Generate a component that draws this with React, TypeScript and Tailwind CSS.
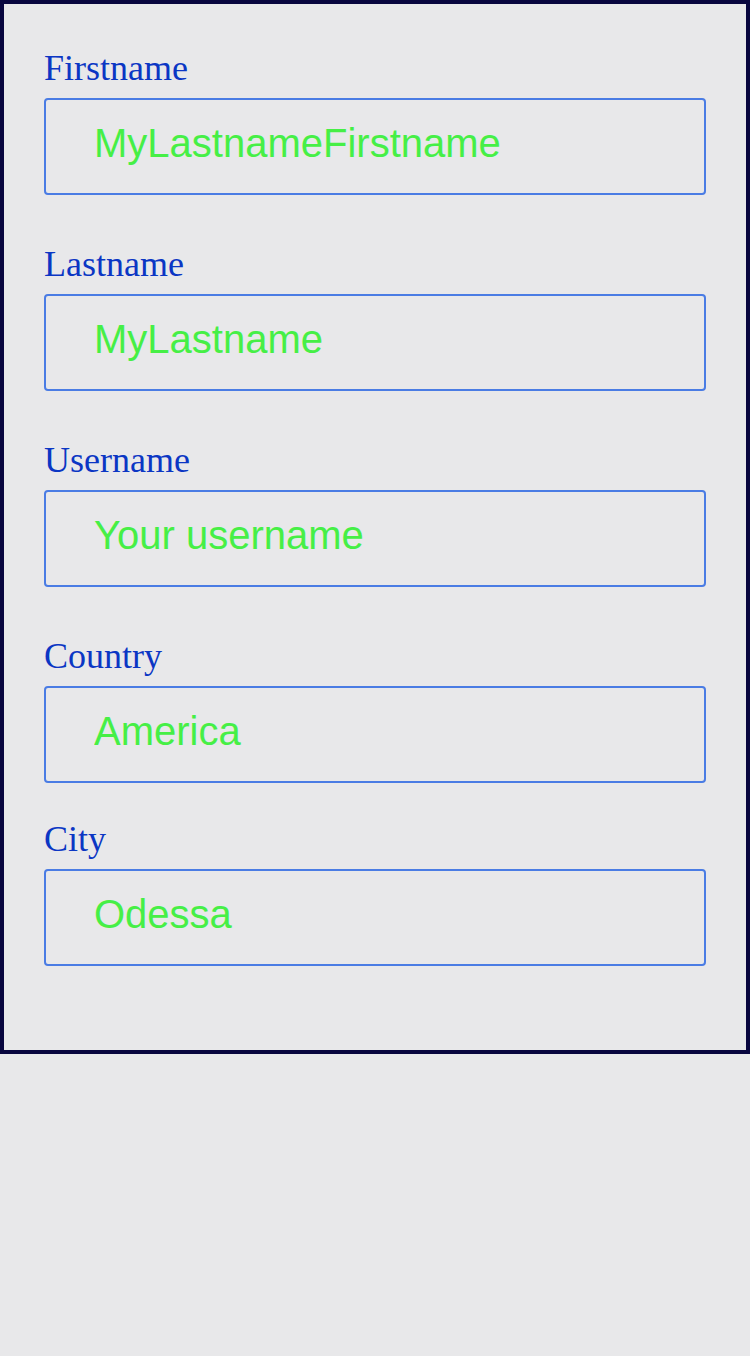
const fields = [
  { label: "Firstname", value: "MyLastnameFirstname", wrap: "mb-[49px]" },
  { label: "Lastname", value: "MyLastname", wrap: "mb-[49px]" },
  { label: "Username", value: "Your username", wrap: "mb-[49px]" },
  { label: "Country", value: "America", wrap: "mb-[36px]" },
  { label: "City", value: "Odessa", wrap: "" },
];

export default function App() {
  return (
    <div className="min-h-screen bg-[#e8e8ea]">
      <form className="border-4 border-[#08063f] bg-[#e8e8ea] px-10 pt-[44px] pb-[84px]">
        {fields.map((f) => (
          <div key={f.label} className={f.wrap}>
            <label
              className="mb-[9px] block h-[41px] text-[36px] leading-[41px] text-[#0b36c4]"
              style={{ fontFamily: '"Liberation Serif", "Times New Roman", serif' }}
            >
              {f.label}
            </label>
            <input
              readOnly
              value={f.value}
              className="block h-[97px] w-full rounded-[4px] border-2 border-[#4a7ce4] bg-transparent pl-12 pr-4 pb-[6px] text-[40px] text-[#46ef46] outline-none"
              style={{ fontFamily: '"Liberation Sans", Arial, sans-serif' }}
            />
          </div>
        ))}
      </form>
    </div>
  );
}
